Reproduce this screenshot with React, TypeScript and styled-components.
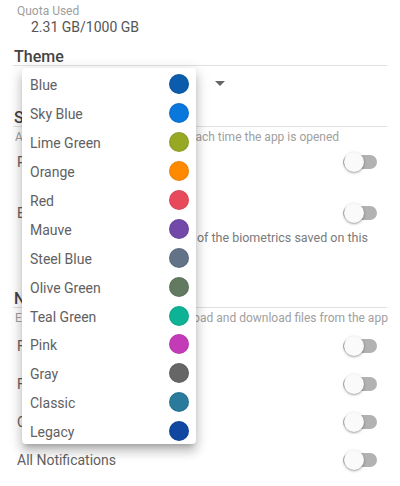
import React from "react";
import styled, { createGlobalStyle } from "styled-components";

const Global = createGlobalStyle`
  html, body { margin: 0; padding: 0; background: #fff; }
  body { font-family: Roboto, "Noto Sans", Arial, sans-serif; -webkit-font-smoothing: antialiased; }
  * { box-sizing: border-box; }
`;

const Page = styled.div`
  position: relative;
  width: 400px;
  height: 486px;
  overflow: hidden;
  padding: 0 13px;
  display: flex;
  flex-direction: column;
`;

const QuotaLabel = styled.div`
  margin-top: 3px;
  height: 16px;
  line-height: 16px;
  padding-left: 4px;
  font-size: 12px;
  color: #9e9e9e;
`;

const QuotaValue = styled.div`
  height: 15px;
  line-height: 16px;
  padding-left: 18px;
  font-size: 14px;
  color: #555;
`;

const Heading = styled.div<{ $mt: number }>`
  margin-top: ${(p) => p.$mt}px;
  height: 19px;
  line-height: 21px;
  padding-left: 1px;
  font-size: 16px;
  font-weight: 500;
  color: #444;
  border-bottom: 1px solid #e0e0e0;
  box-sizing: content-box;
`;

const SelectRow = styled.div`
  height: 34px;
  display: flex;
  align-items: center;
`;

const SelectBox = styled.div`
  width: 214px;
  display: flex;
  align-items: center;
  justify-content: space-between;
  padding: 0 2px 0 14px;
  font-size: 14px;
  color: #555;
`;

const Caret = styled.span`
  width: 0;
  height: 0;
  border-left: 5px solid transparent;
  border-right: 5px solid transparent;
  border-top: 5px solid #666;
`;

const Desc = styled.div<{ $mt?: number }>`
  margin-top: ${(p) => p.$mt ?? 0}px;
  padding-left: 2px;
  padding-right: 14px;
  font-size: 12px;
  line-height: 18px;
  color: #a0a0a0;
  white-space: nowrap;
`;

const RowDesc = styled.div`
  padding-left: 11px;
  padding-right: 4px;
  font-size: 12.5px;
  line-height: 18px;
  color: #7a7a7a;
  white-space: nowrap;
`;

const Row = styled.div<{ $h: number; $mt?: number }>`
  margin-top: ${(p) => p.$mt ?? 0}px;
  height: ${(p) => p.$h}px;
  display: flex;
  align-items: center;
  justify-content: space-between;
  padding: 0 10px 0 4px;
  font-size: 14px;
  color: #616161;
`;

const Switch = styled.span`
  position: relative;
  width: 34px;
  height: 20px;
  display: inline-block;
`;

const Track = styled.span`
  position: absolute;
  left: 0;
  right: 0;
  top: 3px;
  height: 14px;
  border-radius: 7px;
  background: #b2b2b2;
`;

const Thumb = styled.span`
  position: absolute;
  left: 1px;
  top: 0;
  width: 20px;
  height: 20px;
  border-radius: 50%;
  background: #fafafa;
  box-shadow: 0 1px 3px rgba(0, 0, 0, 0.3), 0 1px 1px rgba(0, 0, 0, 0.12);
`;

const Menu = styled.ul`
  position: absolute;
  left: 22px;
  top: 68px;
  width: 174px;
  height: 376px;
  margin: 0;
  padding: 2px 0 0;
  list-style: none;
  overflow: hidden;
  background: #fff;
  border-radius: 4px;
  box-shadow: 0px 5px 5px -3px rgba(0, 0, 0, 0.2),
    0px 8px 10px 1px rgba(0, 0, 0, 0.14), 0px 3px 14px 2px rgba(0, 0, 0, 0.12);
`;

const Item = styled.li`
  height: 28.9px;
  display: flex;
  align-items: center;
  justify-content: space-between;
  padding: 0 7px 0 8px;
  font-size: 14px;
  color: #616161;
`;

const ItemLabel = styled.span`
  padding-top: 2px;
`;

const Dot = styled.span<{ $c: string }>`
  width: 20px;
  height: 20px;
  border-radius: 50%;
  background: ${(p) => p.$c};
  border: 1px solid rgba(0, 0, 0, 0.08);
`;

const themes: [string, string][] = [
  ["Blue", "#0b5cad"],
  ["Sky Blue", "#0a77dd"],
  ["Lime Green", "#97a825"],
  ["Orange", "#ff8a00"],
  ["Red", "#e84a5c"],
  ["Mauve", "#7249a8"],
  ["Steel Blue", "#627388"],
  ["Olive Green", "#627a5f"],
  ["Teal Green", "#0db394"],
  ["Pink", "#c43bb7"],
  ["Gray", "#666666"],
  ["Classic", "#2a7b9b"],
  ["Legacy", "#0f47a1"],
];

const Toggle = () => (
  <Switch>
    <Track />
    <Thumb />
  </Switch>
);

export default function App() {
  return (
    <>
      <Global />
      <Page>
        <QuotaLabel>Quota Used</QuotaLabel>
        <QuotaValue>2.31 GB/1000 GB</QuotaValue>
        <Heading $mt={12}>Theme</Heading>
        <SelectRow>
          <SelectBox>
            <span>Blue</span>
            <Caret />
          </SelectBox>
        </SelectRow>
        <Heading $mt={7}>Security</Heading>
        <Desc $mt={1}>Authentication will be requested each time the app is opened</Desc>
        <Row $h={32}>
          <span>Passcode</span>
          <Toggle />
        </Row>
        <Row $h={32} $mt={19}>
          <span>Enable Biometrics</span>
          <Toggle />
        </Row>
        <RowDesc>
          Allow authentication using any of the biometrics saved on this
          <br />
          device
        </RowDesc>
        <Heading $mt={23}>Notifications</Heading>
        <Desc $mt={1}>Enable notifications when you upload and download files from the app</Desc>
        <Row $h={38}>
          <span>File Uploads</span>
          <Toggle />
        </Row>
        <Row $h={38}>
          <span>File Downloads</span>
          <Toggle />
        </Row>
        <Row $h={38}>
          <span>Comments</span>
          <Toggle />
        </Row>
        <Row $h={38}>
          <span>All Notifications</span>
          <Toggle />
        </Row>
        <Menu>
          {themes.map(([name, color]) => (
            <Item key={name}>
              <ItemLabel>{name}</ItemLabel>
              <Dot $c={color} />
            </Item>
          ))}
        </Menu>
      </Page>
    </>
  );
}
